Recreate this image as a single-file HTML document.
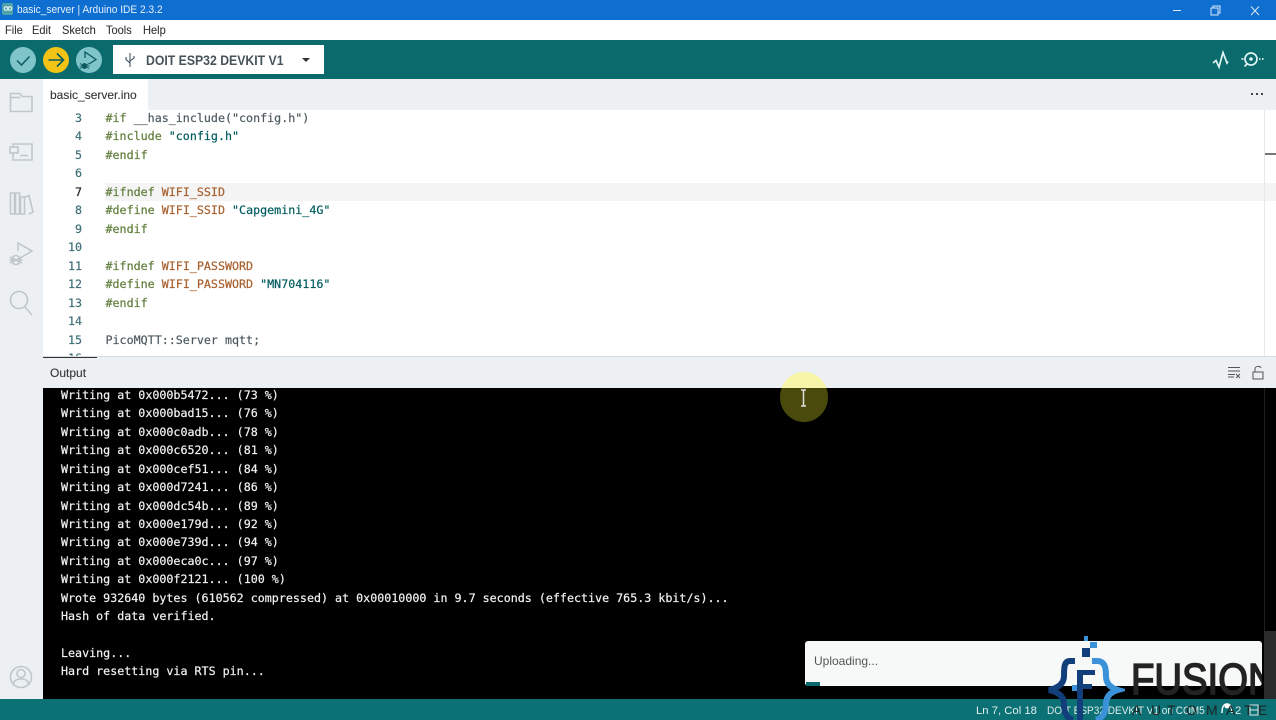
<!DOCTYPE html>
<html><head><meta charset="utf-8"><style>
html,body{margin:0;padding:0;width:1276px;height:720px;overflow:hidden;background:#fff}
body{position:relative;font-family:"Liberation Sans",sans-serif}
#r{position:absolute;left:0;top:0;width:1276px;height:720px;overflow:hidden;filter:blur(.35px)}
div,svg{position:absolute}
.l{position:absolute;left:0;white-space:pre;font:11.68px/18px "DejaVu Sans Mono",monospace;-webkit-text-stroke:.2px currentColor}
.n{color:#3f6f78;text-align:right;width:39px;left:43px}
.c{left:105.5px;color:#4e5b61}
.g{color:#5f7d3a}.o{color:#a8602e}.s{color:#005c5f}
.w{left:61px;color:#f2f2f2}
.m{top:22px;font-size:12px;color:#333;line-height:16px;transform-origin:0 50%;transform:scaleX(.92);-webkit-text-stroke:.1px currentColor}
.d{top:702px;font-size:14px;line-height:16px;color:#1d2526}
</style></head><body><div id="r">
<div style="left:0;top:0;width:1276px;height:20px;background:#0f6fd0"></div>
<div style="left:2px;top:3px;width:11px;height:12px;background:#4fa3a8;border-radius:2px"></div>
<svg style="left:3px;top:5px" width="10" height="7" viewBox="0 0 10 7"><circle cx="3" cy="3.500" r="1.800" fill="none" stroke="#fff"/><circle cx="7" cy="3.500" r="1.800" fill="none" stroke="#fff"/></svg>
<div style="left:17px;top:2px;font-size:11.3px;line-height:16px;color:#e6f0fb;white-space:pre;transform-origin:0 50%;transform:scaleX(.9)">basic_server | Arduino IDE 2.3.2</div>
<svg style="left:1170px;top:2px" width="106" height="18" viewBox="0 0 106 18" fill="none" stroke="#dbe9f8" stroke-width="1"><path d="M3 8.500H11"/><rect x="41" y="6" width="7" height="7"/><path d="M43 6V4H50V11H48"/><path d="M81 4.500L89 13M89 4.500L81 13"/></svg>
<div style="left:0;top:20px;width:1276px;height:20px;background:#fff"></div>
<div class="m" style="left:5px">File</div><div class="m" style="left:32px">Edit</div><div class="m" style="left:62px">Sketch</div><div class="m" style="left:106px">Tools</div><div class="m" style="left:143px">Help</div>
<div style="left:0;top:40px;width:1276px;height:39px;background:#0b6a6c"></div>
<svg style="left:0;top:40px" width="110" height="39" viewBox="0 0 110 39" fill="none">
<circle cx="23" cy="20" r="13" fill="#7fc4c8"/><path d="M17 20.500L21.500 25L29.500 16.500" stroke="#0b5a5f" stroke-width="1.500"/>
<circle cx="56" cy="20" r="13" fill="#f3c316"/><path d="M48.500 20H63M57 13.500L63.500 20L57 26.500" stroke="#0b5a5f" stroke-width="1.600"/>
<circle cx="89" cy="20" r="13" fill="#7fc4c8"/><path d="M85 18V12L96 19.500L89 24" stroke="#0b5a5f" stroke-width="1.300"/><ellipse cx="84.500" cy="26" rx="2.500" ry="3" fill="#0b5a5f"/><path d="M80 23.500L89 28.500M80 28.500L89 23.500M79.500 26H89.500" stroke="#0b5a5f" stroke-width=".9"/>
</svg>
<div style="left:113px;top:45px;width:211px;height:29px;background:#fff"></div>
<svg style="left:123px;top:52px" width="14" height="16" viewBox="0 0 14 16" fill="none" stroke="#345" stroke-width="1"><path d="M7 1V15M7 11L3 7.500V5M7 9L11 6V4"/></svg>
<div style="left:146px;top:51px;font-size:14px;font-weight:bold;line-height:18px;color:#46535a;white-space:pre;transform-origin:0 50%;transform:scaleX(.875)">DOIT ESP32 DEVKIT V1</div>
<div style="left:302px;top:58px;width:0;height:0;border:4px solid transparent;border-top:4px solid #333;border-bottom:0"></div>
<svg style="left:1208px;top:46px" width="60" height="28" viewBox="0 0 60 28" fill="none" stroke="#dff3f2" stroke-width="1.700"><path d="M5 17L8 14.500L11 21L15 6.500L19 17L20 15.500"/><circle cx="43" cy="13" r="6"/><circle cx="43" cy="13" r="1.800" fill="#dff3f2" stroke="none"/><path d="M39 18L36.500 20.500M33.500 13H35.500M51 13H52.500M54 13H55.500"/></svg>
<div style="left:0;top:79px;width:43px;height:620px;background:#ecf0f3"></div>
<div style="left:43px;top:79px;width:1233px;height:31px;background:#ecf0f3"></div>
<div style="left:43px;top:79px;width:105px;height:31px;background:#fff"></div>
<div style="left:50px;top:87px;font-size:12px;line-height:16px;color:#333;-webkit-text-stroke:.1px #333">basic_server.ino</div>
<svg style="left:1250px;top:91px" width="14" height="6"><g fill="#444"><rect x="1" y="2" width="2" height="2"/><rect x="6" y="2" width="2" height="2"/><rect x="11" y="2" width="2" height="2"/></g></svg>
<svg style="left:0;top:79px" width="43" height="620" viewBox="0 0 43 620" fill="none" stroke="#c0c7cb" stroke-width="1.600">
<path d="M10.500 32.500V14.500H20L22 17.500H32V32.500Z"/><path d="M10.500 18.500H20"/>
<path d="M13 68V65H32V81H13V74"/><rect x="10" y="68" width="8" height="6"/><path d="M20 76.500H28"/>
<path d="M10.500 114V135H14.500V114ZM15.500 114V135H19.500V114ZM20.500 118V135H24.500V118ZM25 118L29 116.500L33 133L29 135"/>
<path d="M18 172V164L32 172L22 178"/><ellipse cx="16" cy="181" rx="4" ry="4.500"/><path d="M10 178L22 184M10 184L22 178M9.500 181H22.500"/>
<circle cx="19" cy="221" r="8.500"/><path d="M25 228L32 236"/>
<circle cx="21" cy="598" r="10.500"/><circle cx="21" cy="594.500" r="4"/><path d="M13 606C14 601 17 600 21 600C25 600 28 601 29 606"/>
</svg>
<div style="left:43px;top:110px;width:1233px;height:247px;background:#fff"></div>
<div style="left:105px;top:183px;width:1171px;height:18px;background:#f4f4f4"></div>
<div style="left:1264px;top:110px;width:1px;height:247px;background:#e5e7e8"></div>
<div style="left:1265px;top:153px;width:11px;height:2px;background:#777"></div>
<div class="l n" style="top:109px">3</div>
<div class="l c" style="top:109px"><span class="g">#if</span> __has_include("config.h")</div>
<div class="l n" style="top:127px">4</div>
<div class="l c" style="top:127px"><span class="g">#include</span> <span class="s">"config.h"</span></div>
<div class="l n" style="top:146px">5</div>
<div class="l c" style="top:146px"><span class="g">#endif</span></div>
<div class="l n" style="top:164px">6</div>
<div class="l n" style="top:183px;color:#222">7</div>
<div class="l c" style="top:183px"><span class="g">#ifndef</span> <span class="o">WIFI_SSID</span></div>
<div class="l n" style="top:201px">8</div>
<div class="l c" style="top:201px"><span class="g">#define</span> <span class="o">WIFI_SSID</span> <span class="s">"Capgemini_4G"</span></div>
<div class="l n" style="top:220px">9</div>
<div class="l c" style="top:220px"><span class="g">#endif</span></div>
<div class="l n" style="top:238px">10</div>
<div class="l n" style="top:257px">11</div>
<div class="l c" style="top:257px"><span class="g">#ifndef</span> <span class="o">WIFI_PASSWORD</span></div>
<div class="l n" style="top:275px">12</div>
<div class="l c" style="top:275px"><span class="g">#define</span> <span class="o">WIFI_PASSWORD</span> <span class="s">"MN704116"</span></div>
<div class="l n" style="top:294px">13</div>
<div class="l c" style="top:294px"><span class="g">#endif</span></div>
<div class="l n" style="top:312px">14</div>
<div class="l n" style="top:331px">15</div>
<div class="l c" style="top:331px">PicoMQTT::Server mqtt;</div>
<div style="left:43px;top:352px;width:1233px;height:5px;overflow:hidden"><div class="l n" style="top:-3px;left:0">16</div></div>
<div style="left:43px;top:356px;width:1233px;height:32px;background:#ecf0f3;border-top:1px solid #d8dcde;box-sizing:border-box"></div>
<div style="left:43px;top:357px;width:54px;height:1px;background:#333"></div>
<div style="left:50px;top:365px;font-size:12px;line-height:16px;color:#333;-webkit-text-stroke:.1px #333">Output</div>
<svg style="left:1226px;top:364px" width="42" height="16" viewBox="0 0 42 16" fill="none" stroke="#555" stroke-width="1"><path d="M2 3.500H14M2 7H14M2 10.500H9M2 13H8M10 10L14 14M14 10L10 14"/><rect x="27" y="8" width="10" height="7"/><path d="M29 8V5C29 2 34 1.500 35 4"/></svg>
<div style="left:43px;top:388px;width:1233px;height:311px;background:#000"></div>
<div style="left:1264px;top:388px;width:1px;height:311px;background:#1e1e1e"></div>
<div style="left:1264px;top:631px;width:12px;height:68px;background:#2b2b2b"></div>
<div class="l w" style="top:386px">Writing at 0x000b5472... (73 %)</div>
<div class="l w" style="top:404px">Writing at 0x000bad15... (76 %)</div>
<div class="l w" style="top:423px">Writing at 0x000c0adb... (78 %)</div>
<div class="l w" style="top:441px">Writing at 0x000c6520... (81 %)</div>
<div class="l w" style="top:460px">Writing at 0x000cef51... (84 %)</div>
<div class="l w" style="top:478px">Writing at 0x000d7241... (86 %)</div>
<div class="l w" style="top:497px">Writing at 0x000dc54b... (89 %)</div>
<div class="l w" style="top:515px">Writing at 0x000e179d... (92 %)</div>
<div class="l w" style="top:533px">Writing at 0x000e739d... (94 %)</div>
<div class="l w" style="top:552px">Writing at 0x000eca0c... (97 %)</div>
<div class="l w" style="top:570px">Writing at 0x000f2121... (100 %)</div>
<div class="l w" style="top:589px">Wrote 932640 bytes (610562 compressed) at 0x00010000 in 9.7 seconds (effective 765.3 kbit/s)...</div>
<div class="l w" style="top:607px">Hash of data verified.</div>
<div class="l w" style="top:644px">Leaving...</div>
<div class="l w" style="top:662px">Hard resetting via RTS pin...</div>
<div style="left:780px;top:372px;width:48px;height:16px;overflow:hidden"><div style="left:0;top:0;width:48px;height:50px;border-radius:50%;background:#f6f5a8"></div></div>
<div style="left:780px;top:388px;width:48px;height:35px;overflow:hidden"><div style="left:0;top:-16px;width:48px;height:50px;border-radius:50%;background:#4a4a0c"></div></div>
<svg style="left:798px;top:388px" width="11" height="20" viewBox="0 0 11 20" fill="none"><path d="M3 2H8M5.500 2V18M3 18H8" stroke="#ddd" stroke-width="1.500"/></svg>
<div style="left:805px;top:641px;width:457px;height:45px;background:#f7f9f9;border-radius:3px"></div>
<div style="left:814px;top:653px;font-size:12px;line-height:16px;color:#555">Uploading...</div>
<div style="left:806px;top:682px;width:14px;height:4px;background:#0b6a6c"></div>
<div style="left:0;top:699px;width:1276px;height:21px;background:#0b7175"></div>
<div style="left:976px;top:704px;font-size:11.3px;line-height:14px;color:#e4efef;white-space:pre">Ln 7, Col 18</div>
<div style="left:1047px;top:704px;font-size:11.3px;line-height:14px;color:#dfe9e9;white-space:pre;transform-origin:0 50%;transform:scaleX(.89)">DOIT ESP32 DEVKIT V1 on COM5</div>
<div style="left:1235px;top:704px;font-size:11.3px;line-height:14px;color:#dfe9e9;white-space:pre">2</div>
<svg style="left:1219px;top:702px" width="40" height="16" viewBox="0 0 40 16" fill="none"><path d="M3 11C3 6 4 2 8 2C12 2 13 6 13 11" stroke="#eef5f5" stroke-width="1.500"/><circle cx="8" cy="4" r="2.500" fill="#fff"/><rect x="31" y="3" width="8" height="10" stroke="#dfe9e9"/><path d="M31 8H39" stroke="#dfe9e9"/></svg>
<svg style="left:1045px;top:634px" width="80" height="86" viewBox="0 0 80 86" fill="none">
<rect x="39" y="2" width="4" height="5" fill="#3c92d8"/><rect x="45" y="8" width="7" height="6" fill="#3c92d8"/><rect x="37" y="14" width="8" height="9" fill="#123f7c"/>
<path d="M30 27H25C19 27 19 34 19 42C19 50 13 54 4 56C13 58 19 62 19 70C19 78 21 84 28 86" stroke="#123f7c" stroke-width="6"/>
<path d="M47 27H52C60 27 61 34 61 42C61 50 66 54 73 56C66 58 61 62 61 70C61 78 58 84 51 86" stroke="#3c92d8" stroke-width="6"/>
<path d="M32 36H50V41H38V50H47V55H38V86H32Z" fill="#123f7c"/><rect x="27" y="51" width="5" height="6" fill="#3c92d8"/>
</svg>
<div style="left:1131px;top:656px;width:131px;height:52px;overflow:hidden"><div style="left:0;top:0;font-size:44px;line-height:48px;color:#232323;white-space:pre;-webkit-text-stroke:1.600px #232323;transform-origin:0 50%;transform:scaleX(.87)">FUSION</div></div>
<div class="d" style="left:1132px">A</div><div class="d" style="left:1151px">U</div><div class="d" style="left:1167px">T</div><div class="d" style="left:1186px">O</div><div class="d" style="left:1206px">M</div><div class="d" style="left:1226px">A</div><div class="d" style="left:1244px">T</div><div class="d" style="left:1258px">E</div>
</div></body></html>
